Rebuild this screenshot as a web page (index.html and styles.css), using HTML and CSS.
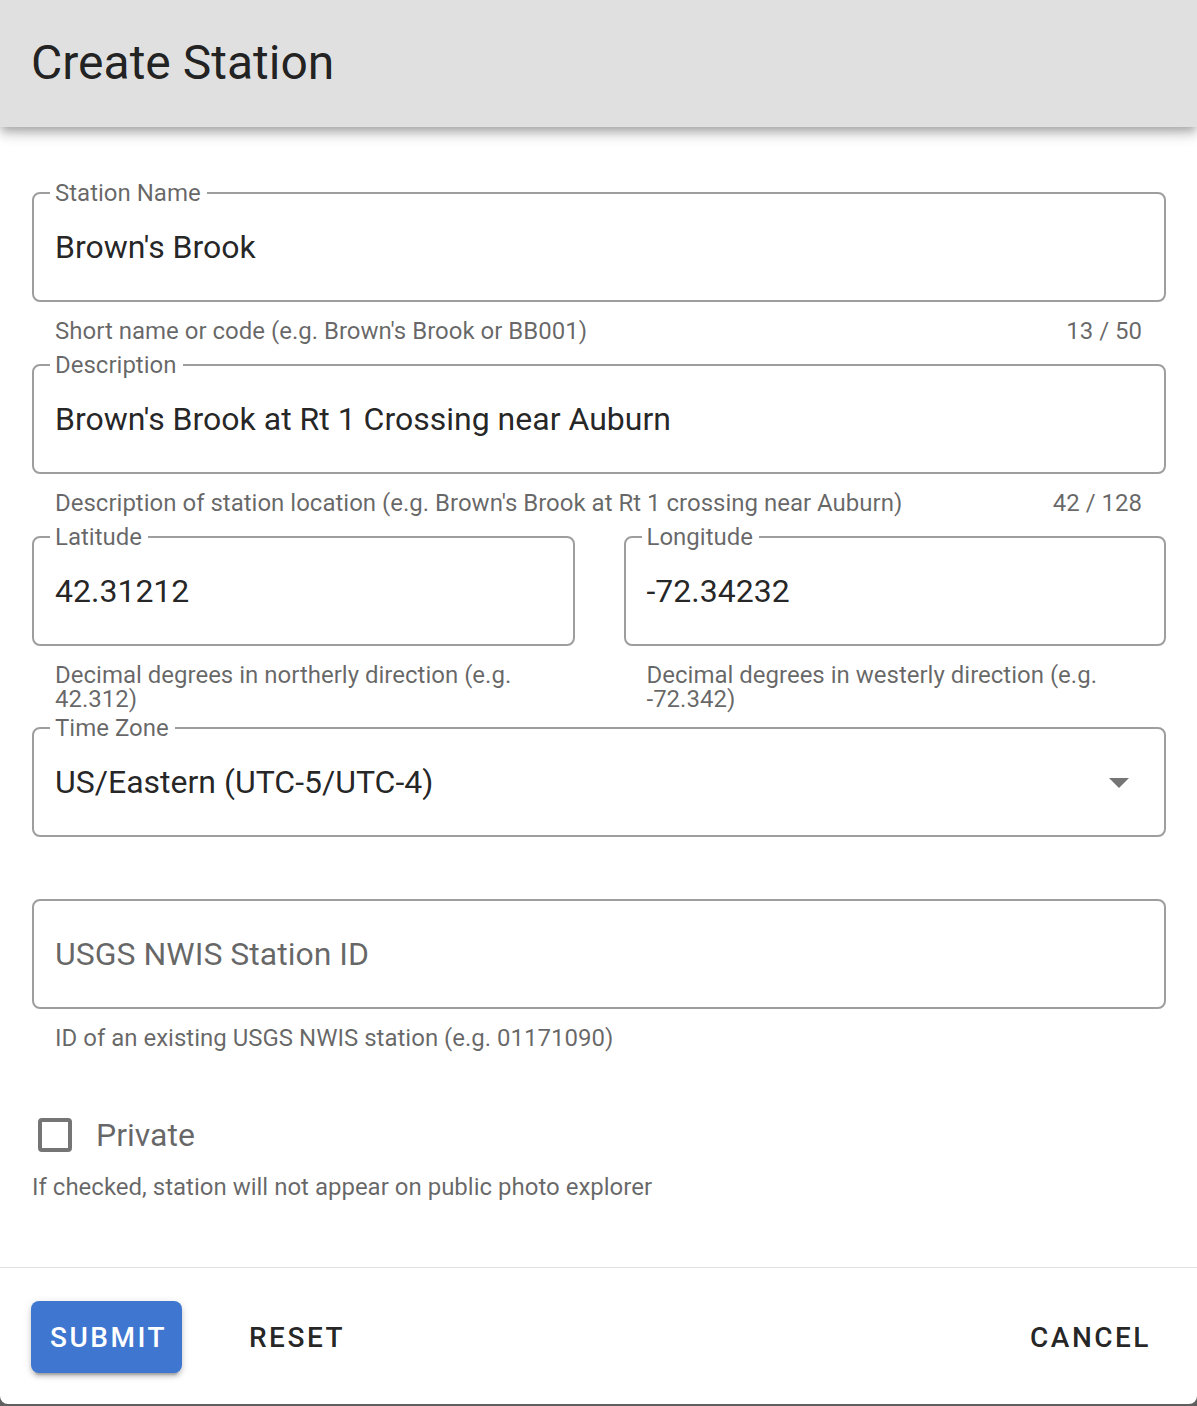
FILE: index.html
```html
<!DOCTYPE html>
<html lang="en">
<head>
<meta charset="utf-8">
<title>Create Station</title>
<link rel="stylesheet" href="styles.css">
</head>
<body>
<div class="dialog">
  <header class="title-bar">
    <h1 class="title">Create Station</h1>
  </header>

  <main class="body">
    <div class="field">
      <div class="box">
        <span class="label">Station Name</span>
        <span class="value">Brown's Brook</span>
      </div>
      <div class="details"><span>Short name or code (e.g. Brown's Brook or BB001)</span><span class="counter">13 / 50</span></div>
    </div>

    <div class="field">
      <div class="box">
        <span class="label">Description</span>
        <span class="value">Brown's Brook at Rt 1 Crossing near Auburn</span>
      </div>
      <div class="details"><span>Description of station location (e.g. Brown's Brook at Rt 1 crossing near Auburn)</span><span class="counter">42 / 128</span></div>
    </div>

    <div class="row">
      <div class="field">
        <div class="box">
          <span class="label">Latitude</span>
          <span class="value">42.31212</span>
        </div>
        <div class="details"><span>Decimal degrees in northerly direction (e.g. 42.312)</span></div>
      </div>
      <div class="field">
        <div class="box">
          <span class="label">Longitude</span>
          <span class="value">-72.34232</span>
        </div>
        <div class="details"><span>Decimal degrees in westerly direction (e.g. -72.342)</span></div>
      </div>
    </div>

    <div class="field">
      <div class="box select">
        <span class="label">Time Zone</span>
        <span class="value">US/Eastern (UTC-5/UTC-4)</span>
        <svg class="arrow" width="20" height="10" viewBox="0 0 20 10"><polygon points="0,0 20,0 10,10" fill="#757575"/></svg>
      </div>
      <div class="details"></div>
    </div>

    <div class="field">
      <div class="box">
        <span class="placeholder">USGS NWIS Station ID</span>
      </div>
      <div class="details"><span>ID of an existing USGS NWIS station (e.g. 01171090)</span></div>
    </div>

    <div class="check-row">
      <span class="checkbox"></span>
      <span class="check-label">Private</span>
    </div>
    <div class="check-hint">If checked, station will not appear on public photo explorer</div>
  </main>

  <div class="divider"></div>

  <footer class="actions">
    <button class="btn primary">SUBMIT</button>
    <button class="btn text reset">RESET</button>
    <span class="spacer"></span>
    <button class="btn text">CANCEL</button>
  </footer>
</div>
</body>
</html>
```

FILE: styles.css
```css
* { box-sizing: border-box; }

html, body {
  margin: 0;
  padding: 0;
}

body {
  background: #5f5f5f;
  font-family: Roboto, "Noto Sans", "Liberation Sans", sans-serif;
  width: 1197px;
  height: 1406px;
}

.dialog {
  width: 1197px;
  height: 1404px;
  background: #ffffff;
  border-radius: 0 0 8px 8px;
  overflow: hidden;
  display: flex;
  flex-direction: column;
}

.title-bar {
  position: relative;
  z-index: 1;
  height: 127px;
  flex: 0 0 127px;
  background: #e0e0e0;
  display: flex;
  align-items: center;
  padding-left: 31px;
  box-shadow: 0 4px 8px -2px rgba(0,0,0,0.2), 0 8px 10px 0 rgba(0,0,0,0.14), 0 2px 20px 0 rgba(0,0,0,0.12);
}

.title {
  margin: 0;
  font-size: 48px;
  font-weight: 400;
  color: rgba(0,0,0,0.87);
  line-height: 1;
  padding-bottom: 2px;
}

.body {
  flex: 1;
  padding: 65px 31px 0 32px;
}

.field {
  display: flex;
  flex-direction: column;
}

.box {
  position: relative;
  height: 110px;
  border: 2px solid #9e9e9e;
  border-radius: 8px;
  display: flex;
  align-items: center;
  padding: 0 21px;
}

.label {
  position: absolute;
  top: -13px;
  left: 16px;
  padding: 0 6px 0 5px;
  background: #ffffff;
  font-size: 24px;
  line-height: 24px;
  color: rgba(0,0,0,0.6);
}

.value {
  font-size: 32px;
  color: rgba(0,0,0,0.87);
  line-height: 40px;
}

.placeholder {
  font-size: 32px;
  color: rgba(0,0,0,0.6);
  line-height: 40px;
}

.select .value { flex: 1; }

.arrow {
  margin-right: 14px;
  margin-top: 2px;
}

.details {
  display: flex;
  justify-content: space-between;
  padding: 17px 24px 0 23px;
  min-height: 46px;
  margin-bottom: 16px;
  font-size: 24px;
  line-height: 24px;
  color: rgba(0,0,0,0.6);
}

.counter {
  margin-left: 24px;
  white-space: nowrap;
}

.row {
  display: grid;
  grid-template-columns: 1fr 1fr;
  column-gap: 49px;
}

.check-row {
  display: flex;
  align-items: center;
  height: 48px;
  margin-top: 40px;
  padding-left: 6px;
}

.checkbox {
  width: 34px;
  height: 34px;
  border: 4px solid #757575;
  border-radius: 4px;
  margin-right: 24px;
}

.check-label {
  font-size: 32px;
  color: rgba(0,0,0,0.6);
  line-height: 40px;
}

.check-hint {
  margin-top: 16px;
  font-size: 24px;
  line-height: 24px;
  color: rgba(0,0,0,0.6);
}

.divider {
  height: 1px;
  flex: 0 0 1px;
  background: #e0e0e0;
}

.actions {
  flex: 0 0 136px;
  display: flex;
  align-items: flex-start;
  padding: 33px 13px 31px 31px;
}

.btn {
  font-family: Roboto, "Noto Sans", "Liberation Sans", sans-serif;
  font-size: 28px;
  font-weight: 500;
  letter-spacing: 2.5px;
  height: 72px;
  border: none;
  background: transparent;
  border-radius: 8px;
  color: rgba(0,0,0,0.87);
  padding: 0 33px;
  cursor: pointer;
}

.btn.primary {
  background: #3e76d0;
  color: #ffffff;
  padding: 0 17px 0 19px;
  width: 151px;
  box-shadow: 0 6px 2px -4px rgba(0,0,0,0.2), 0 4px 4px 0 rgba(0,0,0,0.14), 0 2px 10px 0 rgba(0,0,0,0.12);
}

.btn.reset {
  margin-left: 34px;
}

.spacer { flex: 1; }
```
